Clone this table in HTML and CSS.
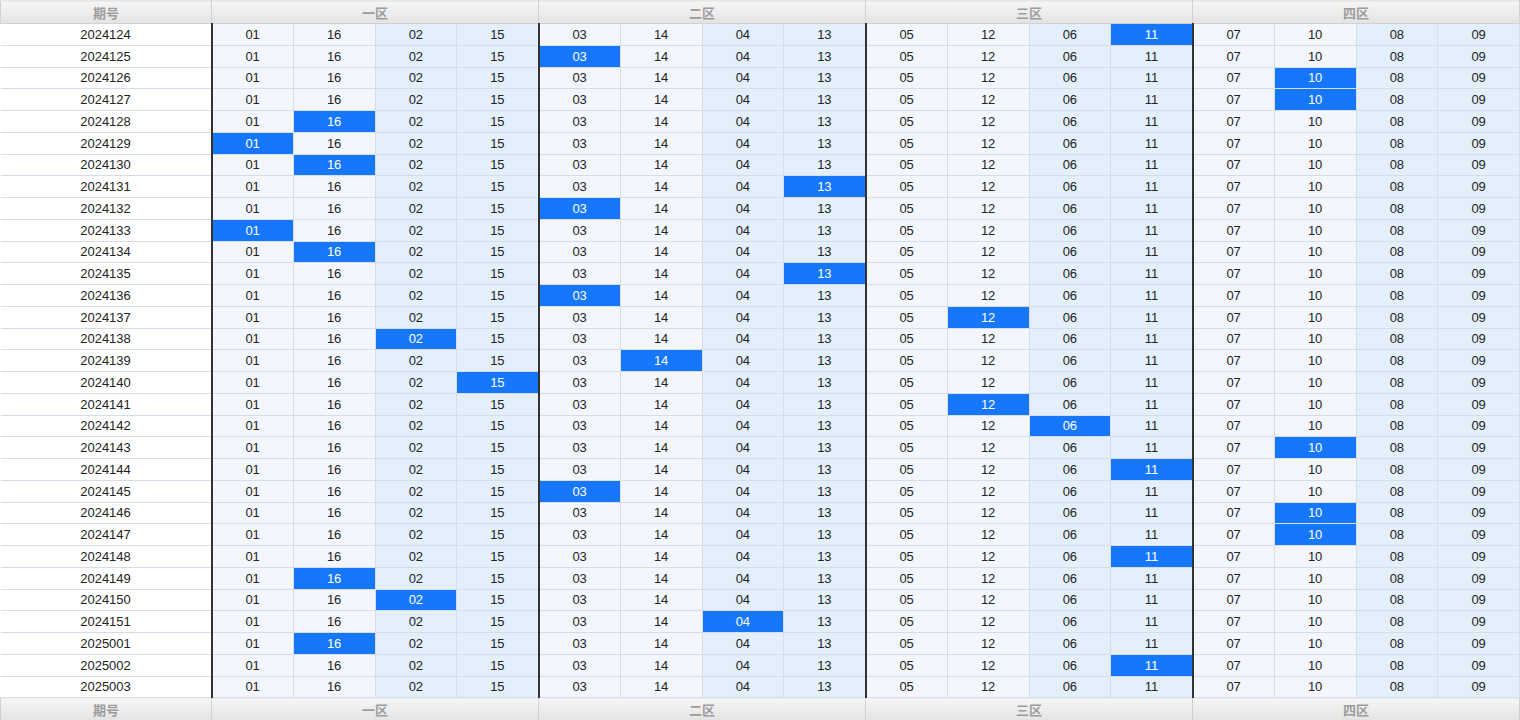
FILE: index.html
```html
<!DOCTYPE html>
<html lang="zh-CN">
<head>
  <meta charset="UTF-8">
  <meta name="viewport" content="width=device-width, initial-scale=1.0">
  <title>分区走势</title>
  <link rel="stylesheet" href="styles.css">
</head>
<body>

<table id="chart">
  <colgroup>
    <col class="col-issue">
  </colgroup>
  <thead>
    <tr>
      <th>期号</th>
      <th colspan="4">一区</th>
      <th colspan="4">二区</th>
      <th colspan="4">三区</th>
      <th colspan="4">四区</th>
    </tr>
  </thead>
  <tbody id="rows"></tbody>
  <tfoot>
    <tr>
      <th>期号</th>
      <th colspan="4">一区</th>
      <th colspan="4">二区</th>
      <th colspan="4">三区</th>
      <th colspan="4">四区</th>
    </tr>
  </tfoot>
</table>

<script>
  const numbers = ['01','16','02','15','03','14','04','13','05','12','06','11','07','10','08','09'];

  // issue, highlighted column index (-1 = none)
  const draws = [
    ['2024124', 11], ['2024125', 4], ['2024126', 13], ['2024127', 13],
    ['2024128', 1], ['2024129', 0], ['2024130', 1], ['2024131', 7],
    ['2024132', 4], ['2024133', 0], ['2024134', 1], ['2024135', 7],
    ['2024136', 4], ['2024137', 9], ['2024138', 2], ['2024139', 5],
    ['2024140', 3], ['2024141', 9], ['2024142', 10], ['2024143', 13],
    ['2024144', 11], ['2024145', 4], ['2024146', 13], ['2024147', 13],
    ['2024148', 11], ['2024149', 1], ['2024150', 2], ['2024151', 6],
    ['2025001', 1], ['2025002', 11], ['2025003', -1]
  ];

  const tbody = document.getElementById('rows');
  let html = '';
  draws.forEach(function (d) {
    html += '<tr><td class="issue">' + d[0] + '</td>';
    numbers.forEach(function (n, i) {
      let cls = (i % 4 < 2) ? 'light' : 'tint';
      if (i % 4 === 0) cls += ' zone-start';
      if (i === d[1]) cls += ' hit';
      html += '<td class="' + cls + '">' + n + '</td>';
    });
    html += '</tr>';
  });
  tbody.innerHTML = html;
</script>

</body>
</html>
```

FILE: styles.css
```css
body {
  margin: 0;
  font-family: "Liberation Sans", Arial, "Noto Sans CJK SC", sans-serif;
  background: #fff;
}

#chart {
  width: 1520px;
  border-collapse: collapse;
  table-layout: fixed;
}

.col-issue {
  width: 211px;
}

th {
  height: 22px;
  padding: 0;
  background: linear-gradient(#f6f6f6, #e3e3e3);
  color: #9c9c9c;
  font-size: 13px;
  font-weight: bold;
  font-family: "Noto Sans CJK SC", "Liberation Sans", sans-serif;
  border: 1px solid #d2d2d2;
  border-top-color: #e6e6e6;
}

td {
  height: 20.75px;
  padding: 0;
  text-align: center;
  font-size: 13px;
  color: #222;
  border: 1px solid #d6dde8;
}

td.issue {
  background: #fff;
  border-left: none;
}

td.light {
  background: #f3f7fd;
}

td.tint {
  background: #e4effc;
}

td.zone-start {
  border-left: 2px solid #333;
}

td.hit {
  background: #1677fb;
  color: #fff;
}
```
